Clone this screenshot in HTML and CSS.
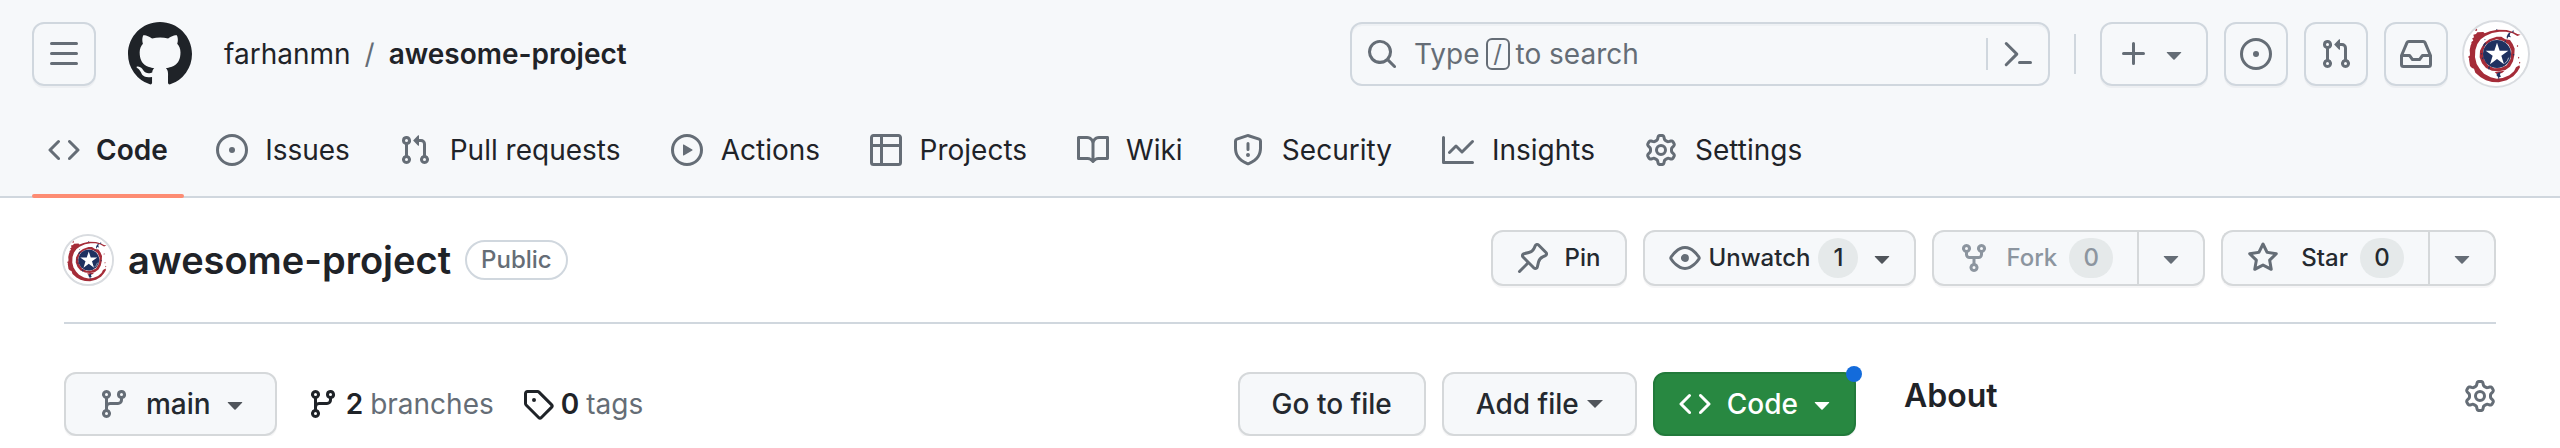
FILE: index.html
```html
<!DOCTYPE html>
<html lang="en">
<head>
<meta charset="utf-8">
<meta name="viewport" content="width=device-width, initial-scale=1">
<title>farhanmn/awesome-project</title>
<link rel="stylesheet" href="styles.css">
</head>
<body>
<svg class="sprite" aria-hidden="true">
  <symbol id="menu" viewBox="0 0 16 16"><path d="M1 2.75A.75.75 0 0 1 1.75 2h12.5a.75.75 0 0 1 0 1.5H1.75A.75.75 0 0 1 1 2.75Zm0 5A.75.75 0 0 1 1.75 7h12.5a.75.75 0 0 1 0 1.5H1.75A.75.75 0 0 1 1 7.75ZM1.75 12h12.5a.75.75 0 0 1 0 1.5H1.75a.75.75 0 0 1 0-1.5Z"/></symbol>
  <symbol id="github" viewBox="0 0 16 16"><path d="M8 0c4.42 0 8 3.58 8 8a8.013 8.013 0 0 1-5.45 7.59c-.4.08-.55-.17-.55-.38 0-.27.01-1.13.01-2.2 0-.75-.25-1.23-.54-1.48 1.78-.2 3.65-.88 3.65-3.95 0-.88-.31-1.59-.82-2.15.08-.2.36-1.02-.08-2.12 0 0-.67-.22-2.2.82-.64-.18-1.32-.27-2-.27-.68 0-1.36.09-2 .27-1.53-1.03-2.2-.82-2.2-.82-.44 1.1-.16 1.92-.08 2.12-.51.56-.82 1.28-.82 2.15 0 3.06 1.86 3.75 3.64 3.95-.23.2-.44.55-.51 1.07-.46.21-1.61.55-2.33-.66-.15-.24-.6-.83-1.23-.82-.67.01-.27.38.01.53.34.19.73.9.82 1.13.16.45.68 1.31 2.69.94 0 .67.01 1.3.01 1.49 0 .21-.15.45-.55.38A7.995 7.995 0 0 1 0 8c0-4.42 3.58-8 8-8Z"/></symbol>
  <symbol id="code" viewBox="0 0 16 16"><path d="m11.28 3.22 4.25 4.25a.75.75 0 0 1 0 1.06l-4.25 4.25a.749.749 0 0 1-1.275-.326.749.749 0 0 1 .215-.734L13.94 8l-3.72-3.72a.749.749 0 0 1 .326-1.275.749.749 0 0 1 .734.215Zm-6.56 0a.751.751 0 0 1 1.042.018.751.751 0 0 1 .018 1.042L2.06 8l3.72 3.72a.749.749 0 0 1-.326 1.275.749.749 0 0 1-.734-.215L.47 8.53a.75.75 0 0 1 0-1.06Z"/></symbol>
  <symbol id="issue" viewBox="0 0 16 16"><path d="M8 9.5a1.5 1.5 0 1 0 0-3 1.5 1.5 0 0 0 0 3Z"/><path d="M8 0a8 8 0 1 1 0 16A8 8 0 0 1 8 0ZM1.5 8a6.5 6.5 0 1 0 13 0 6.5 6.5 0 0 0-13 0Z"/></symbol>
  <symbol id="pull" viewBox="0 0 16 16"><path d="M1.5 3.25a2.25 2.25 0 1 1 3 2.122v5.256a2.251 2.251 0 1 1-1.5 0V5.372A2.25 2.25 0 0 1 1.5 3.25Zm5.677-.177L9.573.677A.25.25 0 0 1 10 .854V2.5h1A2.5 2.5 0 0 1 13.5 5v5.628a2.251 2.251 0 1 1-1.5 0V5a1 1 0 0 0-1-1h-1v1.646a.25.25 0 0 1-.427.177L7.177 3.427a.25.25 0 0 1 0-.354ZM3.75 2.5a.75.75 0 1 0 0 1.5.75.75 0 0 0 0-1.5Zm0 9.5a.75.75 0 1 0 0 1.5.75.75 0 0 0 0-1.5Zm8.25.75a.75.75 0 1 0 1.5 0 .75.75 0 0 0-1.5 0Z"/></symbol>
  <symbol id="play" viewBox="0 0 16 16"><path d="M8 0a8 8 0 1 1 0 16A8 8 0 0 1 8 0ZM1.5 8a6.5 6.5 0 1 0 13 0 6.5 6.5 0 0 0-13 0Zm4.879-2.773 4.264 2.559a.25.25 0 0 1 0 .428l-4.264 2.559A.25.25 0 0 1 6 10.559V5.442a.25.25 0 0 1 .379-.215Z"/></symbol>
  <symbol id="table" viewBox="0 0 16 16"><path d="M0 1.75C0 .784.784 0 1.75 0h12.5C15.216 0 16 .784 16 1.75v12.5A1.75 1.75 0 0 1 14.25 16H1.75A1.75 1.75 0 0 1 0 14.25ZM6.5 6.5v8h7.75a.25.25 0 0 0 .25-.25V6.5Zm8-1.5V1.75a.25.25 0 0 0-.25-.25H6.5V5Zm-13 1.5v7.75c0 .138.112.25.25.25H5v-8ZM5 5V1.5H1.75a.25.25 0 0 0-.25.25V5Z"/></symbol>
  <symbol id="book" viewBox="0 0 16 16"><path d="M0 1.75A.75.75 0 0 1 .75 1h4.253c1.227 0 2.317.59 3 1.501A3.743 3.743 0 0 1 11.006 1h4.245a.75.75 0 0 1 .75.75v10.5a.75.75 0 0 1-.75.75h-4.507a2.25 2.25 0 0 0-1.591.659l-.622.621a.75.75 0 0 1-1.06 0l-.622-.621A2.25 2.25 0 0 0 5.258 13H.75a.75.75 0 0 1-.75-.75Zm7.251 10.324.004-5.073-.002-2.253A2.25 2.25 0 0 0 5.003 2.5H1.5v9h3.757a3.75 3.75 0 0 1 1.994.574ZM8.755 4.75l-.004 7.322a3.752 3.752 0 0 1 1.992-.572H14.5v-9h-3.495a2.25 2.25 0 0 0-2.25 2.25Z"/></symbol>
  <symbol id="shield" viewBox="0 0 16 16"><path d="M7.467.133a1.748 1.748 0 0 1 1.066 0l5.25 1.68A1.75 1.75 0 0 1 15 3.48V7c0 1.566-.32 3.182-1.303 4.682-.983 1.498-2.585 2.813-5.032 3.855a1.697 1.697 0 0 1-1.33 0c-2.447-1.042-4.049-2.357-5.032-3.855C1.32 10.182 1 8.566 1 7V3.48a1.75 1.75 0 0 1 1.217-1.667Zm.61 1.429a.25.25 0 0 0-.153 0l-5.25 1.68a.25.25 0 0 0-.174.238V7c0 1.358.275 2.666 1.057 3.86.784 1.194 2.121 2.34 4.366 3.297a.196.196 0 0 0 .154 0c2.245-.956 3.582-2.104 4.366-3.298C13.225 9.666 13.5 8.36 13.5 7V3.48a.251.251 0 0 0-.174-.237l-5.25-1.68ZM8.75 4.75v3a.75.75 0 0 1-1.5 0v-3a.75.75 0 0 1 1.5 0ZM9 10.5a1 1 0 1 1-2 0 1 1 0 0 1 2 0Z"/></symbol>
  <symbol id="graph" viewBox="0 0 16 16"><path d="M1.5 1.75V13.5h13.75a.75.75 0 0 1 0 1.5H.75a.75.75 0 0 1-.75-.75V1.75a.75.75 0 0 1 1.5 0Zm14.28 2.53-5.25 5.25a.75.75 0 0 1-1.06 0L7 7.06 4.28 9.78a.751.751 0 0 1-1.042-.018.751.751 0 0 1-.018-1.042l3.25-3.25a.75.75 0 0 1 1.06 0L10 7.94l4.72-4.72a.751.751 0 0 1 1.042.018.751.751 0 0 1 .018 1.042Z"/></symbol>
  <symbol id="gear" viewBox="0 0 16 16"><path d="M8 0a8.2 8.2 0 0 1 .701.031C9.444.095 9.99.645 10.16 1.29l.288 1.107c.018.066.079.158.212.224.231.114.454.243.668.386.123.082.233.09.299.071l1.103-.303c.644-.176 1.392.021 1.82.63.27.385.506.792.704 1.218.315.675.111 1.422-.364 1.891l-.814.806c-.049.048-.098.147-.088.294.016.257.016.515 0 .772-.01.147.038.246.088.294l.814.806c.475.469.679 1.216.364 1.891a7.977 7.977 0 0 1-.704 1.217c-.428.61-1.176.807-1.82.63l-1.102-.302c-.067-.019-.177-.011-.3.071a5.909 5.909 0 0 1-.668.386c-.133.066-.194.158-.211.224l-.29 1.106c-.168.646-.715 1.196-1.458 1.26a8.006 8.006 0 0 1-1.402 0c-.743-.064-1.289-.614-1.458-1.26l-.289-1.106c-.018-.066-.079-.158-.212-.224a5.738 5.738 0 0 1-.668-.386c-.123-.082-.233-.09-.299-.071l-1.103.303c-.644.176-1.392-.021-1.82-.63a8.12 8.12 0 0 1-.704-1.218c-.315-.675-.111-1.422.363-1.891l.815-.806c.05-.048.098-.147.088-.294a6.214 6.214 0 0 1 0-.772c.01-.147-.038-.246-.088-.294l-.815-.806C.635 6.045.431 5.298.746 4.623a7.92 7.92 0 0 1 .704-1.217c.428-.61 1.176-.807 1.82-.63l1.102.302c.067.019.177.011.3-.071.214-.143.437-.272.668-.386.133-.066.194-.158.211-.224l.29-1.106C6.009.645 6.556.095 7.299.03 7.53.01 7.764 0 8 0Zm-.571 1.525c-.036.003-.108.036-.137.146l-.289 1.105c-.147.561-.549.967-.998 1.189-.173.086-.34.183-.5.29-.417.278-.97.423-1.529.27l-1.103-.303c-.109-.03-.175.016-.195.045-.22.312-.412.644-.573.99-.014.031-.021.11.059.19l.815.806c.411.406.562.957.53 1.456a4.709 4.709 0 0 0 0 .582c.032.499-.119 1.05-.53 1.456l-.815.806c-.081.08-.073.159-.059.19.162.346.353.677.573.989.02.03.085.076.195.046l1.102-.303c.56-.153 1.113-.008 1.53.27.161.107.328.204.501.29.447.222.85.629.997 1.189l.289 1.105c.029.109.101.143.137.146a6.6 6.6 0 0 0 1.142 0c.036-.003.108-.036.137-.146l.289-1.105c.147-.561.549-.967.998-1.189.173-.086.34-.183.5-.29.417-.278.97-.423 1.529-.27l1.103.303c.109.029.175-.016.195-.045.22-.313.411-.644.573-.99.014-.031.021-.11-.059-.19l-.815-.806c-.411-.406-.562-.957-.53-1.456a4.709 4.709 0 0 0 0-.582c-.032-.499.119-1.05.53-1.456l.815-.806c.081-.08.073-.159.059-.19a6.464 6.464 0 0 0-.573-.989c-.02-.03-.085-.076-.195-.046l-1.102.303c-.56.153-1.113.008-1.53-.27a4.44 4.44 0 0 0-.501-.29c-.447-.222-.85-.629-.997-1.189l-.289-1.105c-.029-.11-.101-.143-.137-.146a6.6 6.6 0 0 0-1.142 0ZM11 8a3 3 0 1 1-6 0 3 3 0 0 1 6 0ZM9.5 8a1.5 1.5 0 1 0-3.001.001A1.5 1.5 0 0 0 9.5 8Z"/></symbol>
  <symbol id="search" viewBox="0 0 16 16"><path d="M10.68 11.74a6 6 0 0 1-7.922-8.982 6 6 0 0 1 8.982 7.922l3.04 3.04a.749.749 0 0 1-.326 1.275.749.749 0 0 1-.734-.215ZM11.5 7a4.499 4.499 0 1 0-8.997 0A4.499 4.499 0 0 0 11.5 7Z"/></symbol>
  <symbol id="palette" viewBox="0 0 16 16"><path d="m6.354 8.04-4.773 4.773a.75.75 0 1 0 1.061 1.06L7.945 8.57a.75.75 0 0 0 0-1.06L2.642 2.206a.75.75 0 0 0-1.06 1.061L6.353 8.04ZM8.75 11.5a.75.75 0 0 0 0 1.5h5.5a.75.75 0 0 0 0-1.5h-5.5Z"/></symbol>
  <symbol id="plus" viewBox="0 0 16 16"><path d="M7.75 2a.75.75 0 0 1 .75.75V7h4.25a.75.75 0 0 1 0 1.5H8.5v4.25a.75.75 0 0 1-1.5 0V8.5H2.75a.75.75 0 0 1 0-1.5H7V2.75A.75.75 0 0 1 7.75 2Z"/></symbol>
  <symbol id="triangle" viewBox="0 0 16 16"><path d="m4.427 7.427 3.396 3.396a.25.25 0 0 0 .354 0l3.396-3.396A.25.25 0 0 0 11.396 7H4.604a.25.25 0 0 0-.177.427Z"/></symbol>
  <symbol id="inbox" viewBox="0 0 16 16"><path d="M2.8 2.06A1.75 1.75 0 0 1 4.41 1h7.18c.7 0 1.333.417 1.61 1.06l2.74 6.395c.04.093.06.194.06.295v4.5A1.75 1.75 0 0 1 14.25 15H1.75A1.75 1.75 0 0 1 0 13.25v-4.5c0-.101.02-.202.06-.295Zm1.61.44a.25.25 0 0 0-.23.152L1.887 8H4.75a.75.75 0 0 1 .6.3L6.625 10h2.75l1.275-1.7a.75.75 0 0 1 .6-.3h2.863L11.82 2.652a.25.25 0 0 0-.23-.152Zm10.09 7h-2.875l-1.275 1.7a.75.75 0 0 1-.6.3h-3.5a.75.75 0 0 1-.6-.3L4.375 9.5H1.5v3.75c0 .138.112.25.25.25h12.5a.25.25 0 0 0 .25-.25Z"/></symbol>
  <symbol id="pin" viewBox="0 0 16 16"><path d="m11.294.984 3.722 3.722a1.75 1.75 0 0 1-.504 2.826l-1.327.613a3.089 3.089 0 0 0-1.707 2.084l-.584 2.454c-.317 1.332-1.972 1.8-2.94.832L5.75 11.311 1.78 15.28a.749.749 0 1 1-1.06-1.06l3.969-3.97-2.204-2.204c-.968-.968-.5-2.623.832-2.94l2.454-.584a3.08 3.08 0 0 0 2.084-1.707l.613-1.327a1.75 1.75 0 0 1 2.826-.504ZM6.283 9.723l2.732 2.731a.25.25 0 0 0 .42-.119l.584-2.454a4.586 4.586 0 0 1 2.537-3.098l1.328-.613a.25.25 0 0 0 .072-.404l-3.722-3.722a.25.25 0 0 0-.404.072l-.613 1.328a4.584 4.584 0 0 1-3.098 2.537l-2.454.584a.25.25 0 0 0-.119.42l2.731 2.732Z"/></symbol>
  <symbol id="eye" viewBox="0 0 16 16"><path d="M8 2c1.981 0 3.671.992 4.933 2.078 1.27 1.091 2.187 2.345 2.637 3.023a1.62 1.62 0 0 1 0 1.798c-.45.678-1.367 1.932-2.637 3.023C11.67 13.008 9.981 14 8 14c-1.981 0-3.671-.992-4.933-2.078C1.797 10.83.88 9.576.43 8.898a1.62 1.62 0 0 1 0-1.798c.45-.677 1.367-1.931 2.637-3.022C4.33 2.992 6.019 2 8 2ZM1.679 7.932a.12.12 0 0 0 0 .136c.411.622 1.241 1.75 2.366 2.717C5.176 11.758 6.527 12.5 8 12.5c1.473 0 2.825-.742 3.955-1.715 1.124-.967 1.954-2.096 2.366-2.717a.12.12 0 0 0 0-.136c-.412-.621-1.242-1.75-2.366-2.717C10.824 4.242 9.473 3.5 8 3.5c-1.473 0-2.825.742-3.955 1.715-1.124.967-1.954 2.096-2.366 2.717ZM8 10a2 2 0 1 1-.001-3.999A2 2 0 0 1 8 10Z"/></symbol>
  <symbol id="fork" viewBox="0 0 16 16"><path d="M5 5.372v.878c0 .414.336.75.75.75h4.5a.75.75 0 0 0 .75-.75v-.878a2.25 2.25 0 1 1 1.5 0v.878a2.25 2.25 0 0 1-2.25 2.25h-1.5v2.128a2.251 2.251 0 1 1-1.5 0V8.5h-1.5A2.25 2.25 0 0 1 3.5 6.25v-.878a2.25 2.25 0 1 1 1.5 0ZM5 3.25a.75.75 0 1 0-1.5 0 .75.75 0 0 0 1.5 0Zm6.75.75a.75.75 0 1 0 0-1.5.75.75 0 0 0 0 1.5Zm-3 8.75a.75.75 0 1 0-1.5 0 .75.75 0 0 0 1.5 0Z"/></symbol>
  <symbol id="star" viewBox="0 0 16 16"><path d="M8 .25a.75.75 0 0 1 .673.418l1.882 3.815 4.21.612a.75.75 0 0 1 .416 1.279l-3.046 2.97.719 4.192a.751.751 0 0 1-1.088.791L8 12.347l-3.766 1.98a.75.75 0 0 1-1.088-.79l.72-4.194L.818 6.374a.75.75 0 0 1 .416-1.28l4.21-.611L7.327.668A.75.75 0 0 1 8 .25Zm0 2.445L6.615 5.5a.75.75 0 0 1-.564.41l-3.097.45 2.24 2.184a.75.75 0 0 1 .216.664l-.528 3.084 2.769-1.456a.75.75 0 0 1 .698 0l2.77 1.456-.53-3.084a.75.75 0 0 1 .216-.664l2.24-2.183-3.096-.45a.75.75 0 0 1-.564-.41L8 2.694Z"/></symbol>
  <symbol id="branch" viewBox="0 0 16 16"><path d="M9.5 3.25a2.25 2.25 0 1 1 3 2.122V6A2.5 2.5 0 0 1 10 8.5H6a1 1 0 0 0-1 1v1.128a2.251 2.251 0 1 1-1.5 0V5.372a2.25 2.25 0 1 1 1.5 0v1.836A2.493 2.493 0 0 1 6 7h4a1 1 0 0 0 1-1v-.628A2.25 2.25 0 0 1 9.5 3.25Zm-6 0a.75.75 0 1 0 1.5 0 .75.75 0 0 0-1.5 0Zm8.25-.75a.75.75 0 1 0 0 1.5.75.75 0 0 0 0-1.5ZM4.25 12a.75.75 0 1 0 0 1.5.75.75 0 0 0 0-1.5Z"/></symbol>
  <symbol id="tag" viewBox="0 0 16 16"><path d="M1 7.775V2.75C1 1.784 1.784 1 2.75 1h5.025c.464 0 .91.184 1.238.513l6.25 6.25a1.75 1.75 0 0 1 0 2.474l-5.026 5.026a1.75 1.75 0 0 1-2.474 0l-6.25-6.25A1.752 1.752 0 0 1 1 7.775Zm1.5 0c0 .066.026.13.073.177l6.25 6.25a.25.25 0 0 0 .354 0l5.025-5.025a.25.25 0 0 0 0-.354l-6.25-6.25a.25.25 0 0 0-.177-.073H2.75a.25.25 0 0 0-.25.25ZM6 5a1 1 0 1 1 0 2 1 1 0 0 1 0-2Z"/></symbol>
  <symbol id="avatar" viewBox="0 0 192 192">
    <circle cx="96" cy="96" r="96" fill="#fff"/>
    <g fill="#a52c38">
      <path d="M170 38 160 36 148 30 128 24 100 23 78 28 62 34 58 30 40 31 36 36 28 38 30 46 24 50 28 54 20 70 17 84 18 96 15 112 18 132 24 138 30 140 34 152 50 166 66 175 84 180 104 181 128 175 148 163 160 149 168 136 166 130 156 136 150 148 136 160 116 168 98 170 80 166 60 155 48 142 38 126 33 106 34 84 40 66 50 52 64 42 84 33 106 29 126 29 146 34 160 42Z"/>
      <path fill-rule="evenodd" d="M98 44 112 44 124 52 138 54 146 66 152 80 151 100 147 118 138 134 124 144 104 148 84 146 66 138 54 124 47 106 48 86 54 74 62 62 76 52Z M98 52 80 58 64 70 57 88 60 112 72 130 90 139 110 138 128 130 140 110 142 86 134 68 118 57Z"/>
      <path d="m33 24 4-5 3 5-4 4ZM22 60l5-3 1 5-5 3ZM13 103l5-1 1 5-5 1ZM158 72l3-3 2 3-3 3ZM162 106l3-2 1 4-3 2ZM165 121l3-2 1 4-3 2ZM92 150l30-4-8 7-16 3Z"/>
    </g>
    <g fill="#1f3160">
      <circle cx="99" cy="96" r="42"/>
      <path d="m128 44 4-9 8-5-3 10 4 6-8-2-4 8ZM145 28l3-4 1 6-4 2ZM121 57l4-2 2 4-4 1ZM59 66l7-5-2 9-7 4ZM50 93l6 2-5 3ZM53 108l6-3-2 8ZM72 135l5-2 1 6-4 4ZM101 153l9-3-2 8 3 6-5 1-1 10-3-10-5-6ZM146 97l5-1-2 6ZM96 24l3-4 1 4ZM60 53l5-2-2 4Z"/>
    </g>
    <path fill="#fff" d="m99 62 8 24h26l-21 15 8 26-21-16-21 16 8-26-21-15h26Z"/>
    <path fill="none" stroke="#fff" stroke-width="2" d="M122 125q10-8 12-18"/>
  </symbol>
</svg>

<header class="app-header">
  <div class="global-bar">
    <div class="context">
      <button class="icon-button" aria-label="Open menu"><svg class="icon"><use href="#menu"/></svg></button>
      <a class="logo" href="#" aria-label="Homepage"><svg><use href="#github"/></svg></a>
      <nav class="breadcrumb" aria-label="Breadcrumb">
        <a href="#">farhanmn</a><span class="slash">/</span><a class="current" href="#">awesome-project</a>
      </nav>
    </div>
    <div class="tools">
      <div class="search">
        <button class="search-trigger"><svg class="icon"><use href="#search"/></svg><span class="search-text">Type <kbd>/</kbd> to search</span></button>
        <button class="palette" aria-label="Command palette"><svg class="icon"><use href="#palette"/></svg></button>
      </div>
      <span class="separator"></span>
      <div class="actions">
        <button class="icon-button create" aria-label="Create new"><svg class="icon"><use href="#plus"/></svg><svg class="icon"><use href="#triangle"/></svg></button>
        <a class="icon-button" href="#" aria-label="Issues"><svg class="icon"><use href="#issue"/></svg></a>
        <a class="icon-button" href="#" aria-label="Pull requests"><svg class="icon"><use href="#pull"/></svg></a>
        <a class="icon-button" href="#" aria-label="Notifications"><svg class="icon"><use href="#inbox"/></svg></a>
        <button class="profile" aria-label="Open user menu"><svg class="avatar avatar-large"><use href="#avatar"/></svg></button>
      </div>
    </div>
  </div>
  <nav class="tabs" aria-label="Repository">
    <a class="tab selected" href="#" aria-current="page"><svg class="icon"><use href="#code"/></svg><span class="tab-label" data-content="Code">Code</span></a>
    <a class="tab" href="#"><svg class="icon"><use href="#issue"/></svg><span class="tab-label" data-content="Issues">Issues</span></a>
    <a class="tab" href="#"><svg class="icon"><use href="#pull"/></svg><span class="tab-label" data-content="Pull requests">Pull requests</span></a>
    <a class="tab" href="#"><svg class="icon"><use href="#play"/></svg><span class="tab-label" data-content="Actions">Actions</span></a>
    <a class="tab" href="#"><svg class="icon"><use href="#table"/></svg><span class="tab-label" data-content="Projects">Projects</span></a>
    <a class="tab" href="#"><svg class="icon"><use href="#book"/></svg><span class="tab-label" data-content="Wiki">Wiki</span></a>
    <a class="tab" href="#"><svg class="icon"><use href="#shield"/></svg><span class="tab-label" data-content="Security">Security</span></a>
    <a class="tab" href="#"><svg class="icon"><use href="#graph"/></svg><span class="tab-label" data-content="Insights">Insights</span></a>
    <a class="tab" href="#"><svg class="icon"><use href="#gear"/></svg><span class="tab-label" data-content="Settings">Settings</span></a>
  </nav>
</header>

<main class="page">
  <div class="repo-head">
    <div class="repo-title">
      <svg class="avatar avatar-small"><use href="#avatar"/></svg>
      <h1><a href="#">awesome-project</a></h1>
      <span class="badge">Public</span>
    </div>
    <div class="repo-actions">
      <button class="btn btn-sm btn-pin"><svg class="icon"><use href="#pin"/></svg>Pin</button>
      <button class="btn btn-sm btn-watch"><svg class="icon"><use href="#eye"/></svg>Unwatch<span class="counter">1</span><svg class="icon icon-dark"><use href="#triangle"/></svg></button>
      <div class="btn-group">
        <button class="btn btn-sm btn-count" disabled><svg class="icon"><use href="#fork"/></svg><span>Fork</span><span class="counter">0</span></button>
        <button class="btn btn-sm btn-more" aria-label="Fork options"><svg class="icon"><use href="#triangle"/></svg></button>
      </div>
      <div class="btn-group">
        <button class="btn btn-sm btn-count btn-star"><svg class="icon"><use href="#star"/></svg><span>Star</span><span class="counter">0</span></button>
        <button class="btn btn-sm btn-more" aria-label="Star options"><svg class="icon"><use href="#triangle"/></svg></button>
      </div>
    </div>
  </div>

  <div class="columns">
    <div class="file-nav">
      <button class="btn btn-branch"><svg class="icon"><use href="#branch"/></svg><span class="branch-name">main</span><svg class="icon icon-dark"><use href="#triangle"/></svg></button>
      <div class="stats">
        <a href="#"><svg class="icon"><use href="#branch"/></svg><strong>2</strong> <span>branches</span></a>
        <a href="#"><svg class="icon"><use href="#tag"/></svg><strong>0</strong> <span>tags</span></a>
      </div>
      <div class="file-actions">
        <a class="btn" href="#">Go to file</a>
        <button class="btn btn-add">Add file<span class="caret"></span></button>
        <button class="btn btn-primary"><svg class="icon"><use href="#code"/></svg><span class="primary-label">Code</span><svg class="icon"><use href="#triangle"/></svg><span class="dot"></span></button>
      </div>
    </div>
    <aside class="about">
      <h2>About</h2>
      <button class="plain" aria-label="Edit repository details"><svg class="icon"><use href="#gear"/></svg></button>
    </aside>
  </div>
</main>
</body>
</html>
```

FILE: styles.css
```css
:root {
  --fg: #1f2328;
  --muted: #656d76;
  --border: #d0d7de;
  --subtle: #f6f8fa;
  --btn-border: #d5d8da;
}

* { box-sizing: border-box; }

body {
  margin: 0;
  background: #fff;
  color: var(--fg);
  font-family: Inter, "Liberation Sans", sans-serif;
  font-size: 28px;
  line-height: 40px;
}

a { color: inherit; text-decoration: none; }
button { font: inherit; color: inherit; margin: 0; padding: 0; border: 0; background: none; }
h1, h2 { margin: 0; }

.sprite { position: absolute; width: 0; height: 0; }
.icon { width: 32px; height: 32px; flex: none; fill: var(--muted); }
.icon-dark { fill: #50555b; }

/* Global header */
.app-header {
  background: var(--subtle);
  border-bottom: 2px solid var(--border);
}
.global-bar {
  display: flex;
  justify-content: space-between;
  align-items: center;
  padding: 20px 30px 20px 32px;
}
.context, .tools, .actions { display: flex; align-items: center; }
.context { gap: 32px; }
.icon-button {
  display: flex;
  align-items: center;
  justify-content: center;
  width: 64px;
  height: 64px;
  border: 2px solid var(--border);
  border-radius: 12px;
  box-shadow: 0 2px 0 rgba(31, 35, 40, 0.04);
}
.create { width: 108px; gap: 8px; }
.logo svg { display: block; width: 64px; height: 64px; fill: var(--fg); }
.breadcrumb { display: flex; gap: 14px; }
.slash { color: var(--muted); }
.current { font-weight: 600; }

.tools { gap: 24px; }
.search {
  display: flex;
  align-items: center;
  width: 700px;
  height: 64px;
  border: 2px solid var(--border);
  border-radius: 12px;
  box-shadow: inset 0 2px 0 rgba(208, 215, 222, 0.2);
}
.search-trigger {
  display: flex;
  flex: 1;
  align-items: center;
  gap: 16px;
  padding-left: 14px;
  color: var(--muted);
}
.search-text { display: flex; align-items: center; gap: 6px; }
kbd {
  width: 24px;
  height: 32px;
  border: 2px solid var(--muted);
  border-radius: 6px;
  font: inherit;
  font-size: 24px;
  line-height: 28px;
  text-align: center;
}
.palette {
  display: flex;
  justify-content: center;
  width: 62px;
  height: 32px;
  border-left: 2px solid var(--border);
}
.separator { width: 2px; height: 40px; background: var(--border); }
.actions { gap: 16px; }
.profile { display: flex; margin-left: -2px; }

.avatar { flex: none; border-radius: 50%; border: 2px solid #d9dce0; }
.avatar-large { width: 68px; height: 68px; }
.avatar-small { width: 52px; height: 52px; }

/* Repository tabs */
.tabs { display: flex; gap: 16px; padding: 0 32px; }
.tab {
  display: flex;
  align-items: center;
  gap: 16px;
  height: 88px;
  padding: 0 16px 4px;
  position: relative;
}
.tab-label { display: grid; justify-items: center; }
.tab-label::after {
  content: attr(data-content);
  height: 0;
  visibility: hidden;
  font-weight: 600;
}
.selected { font-weight: 600; }
.selected::after {
  content: "";
  position: absolute;
  inset: auto 0 -2px;
  height: 4px;
  border-radius: 2px;
  background: #fd8c73;
}

/* Repository heading */
.page { padding: 32px 64px 0; }
.repo-head {
  display: flex;
  justify-content: space-between;
  align-items: flex-start;
  padding-bottom: 36px;
  border-bottom: 2px solid var(--border);
}
.repo-title { display: flex; align-items: center; gap: 14px; padding-top: 4px; margin-left: -2px; }
.repo-title h1 { font-size: 38px; line-height: 52px; font-weight: 600; }
.badge {
  padding: 0 14px;
  border: 2px solid var(--border);
  border-radius: 40px;
  color: var(--muted);
  font-size: 24px;
  line-height: 36px;
  font-weight: 500;
}
.repo-actions { display: flex; gap: 16px; }

.btn {
  display: flex;
  align-items: center;
  height: 64px;
  padding: 0 32px;
  border: 2px solid var(--btn-border);
  border-radius: 12px;
  background: var(--subtle);
  box-shadow: 0 2px 0 rgba(31, 35, 40, 0.04);
  color: #24292f;
  font-weight: 500;
  white-space: nowrap;
}
.btn-sm { height: 56px; padding: 0 24px; font-size: 24px; }
.btn-pin { gap: 16px; }
.btn-watch { gap: 8px; padding-right: 16px; }
.btn-count { gap: 12px; }
.btn-count .icon { margin-right: 4px; }
.btn-star .icon { margin-right: 10px; }
.btn-group { display: flex; }
.btn-group .btn-count { border-radius: 12px 0 0 12px; border-right: 0; }
.btn-more { padding: 0 16px; border-radius: 0 12px 12px 0; }
.btn:disabled { color: #8c959f; }
.btn:disabled .icon { fill: #8c959f; }
.counter {
  min-width: 40px;
  padding: 0 12px;
  border-radius: 40px;
  background: #e5e9ea;
  text-align: center;
}
.btn-count .counter { min-width: 44px; }
.caret {
  border: 8px solid transparent;
  border-top-color: #50555b;
  border-bottom: 0;
}

/* File navigation and sidebar */
.columns {
  display: grid;
  grid-template-columns: minmax(0, 1fr) 592px;
  gap: 48px;
  padding-top: 48px;
}
.file-nav { display: flex; align-items: center; }
.btn-branch { gap: 8px; padding-right: 24px; }
.branch-name, .primary-label { margin-left: 8px; }
.stats { display: flex; gap: 28px; margin-left: 30px; }
.stats a { display: flex; align-items: center; gap: 7px; color: var(--muted); }
.stats .icon { fill: var(--fg); }
.stats strong { color: var(--fg); font-weight: 600; }
.file-actions { display: flex; gap: 16px; margin-left: auto; }
.btn-add { gap: 8px; }
.btn-primary {
  position: relative;
  gap: 8px;
  padding: 0 16px 0 24px;
  border-color: #227a3b;
  background: #288841;
  color: #fff;
}
.btn-primary .icon { fill: #fff; }
.dot {
  position: absolute;
  top: -8px;
  right: -8px;
  width: 16px;
  height: 16px;
  border-radius: 50%;
  background: #136bdb;
}
.about { display: flex; justify-content: space-between; align-items: flex-start; padding-top: 4px; }
.about h2 { font-size: 32px; line-height: 40px; font-weight: 600; }
.plain { display: flex; padding-top: 4px; }
```
